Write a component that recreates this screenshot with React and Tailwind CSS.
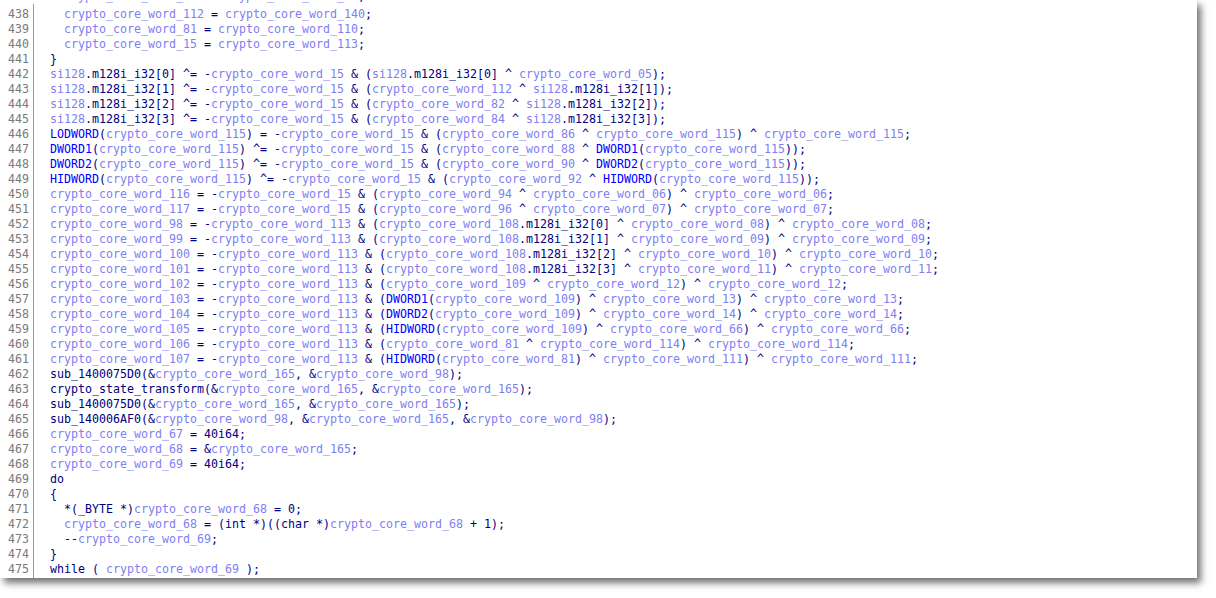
import React from 'react';

// Pseudocode lines, 437 is cut off by the top of the view (only its descenders show)
const FIRST_LINE = 438;
const CUT_LINE = '  crypto_core_word_140 = crypto_core_word_15;';
const LINES = [
  '  crypto_core_word_112 = crypto_core_word_140;',
  '  crypto_core_word_81 = crypto_core_word_110;',
  '  crypto_core_word_15 = crypto_core_word_113;',
  '}',
  'si128.m128i_i32[0] ^= -crypto_core_word_15 & (si128.m128i_i32[0] ^ crypto_core_word_05);',
  'si128.m128i_i32[1] ^= -crypto_core_word_15 & (crypto_core_word_112 ^ si128.m128i_i32[1]);',
  'si128.m128i_i32[2] ^= -crypto_core_word_15 & (crypto_core_word_82 ^ si128.m128i_i32[2]);',
  'si128.m128i_i32[3] ^= -crypto_core_word_15 & (crypto_core_word_84 ^ si128.m128i_i32[3]);',
  'LODWORD(crypto_core_word_115) = -crypto_core_word_15 & (crypto_core_word_86 ^ crypto_core_word_115) ^ crypto_core_word_115;',
  'DWORD1(crypto_core_word_115) ^= -crypto_core_word_15 & (crypto_core_word_88 ^ DWORD1(crypto_core_word_115));',
  'DWORD2(crypto_core_word_115) ^= -crypto_core_word_15 & (crypto_core_word_90 ^ DWORD2(crypto_core_word_115));',
  'HIDWORD(crypto_core_word_115) ^= -crypto_core_word_15 & (crypto_core_word_92 ^ HIDWORD(crypto_core_word_115));',
  'crypto_core_word_116 = -crypto_core_word_15 & (crypto_core_word_94 ^ crypto_core_word_06) ^ crypto_core_word_06;',
  'crypto_core_word_117 = -crypto_core_word_15 & (crypto_core_word_96 ^ crypto_core_word_07) ^ crypto_core_word_07;',
  'crypto_core_word_98 = -crypto_core_word_113 & (crypto_core_word_108.m128i_i32[0] ^ crypto_core_word_08) ^ crypto_core_word_08;',
  'crypto_core_word_99 = -crypto_core_word_113 & (crypto_core_word_108.m128i_i32[1] ^ crypto_core_word_09) ^ crypto_core_word_09;',
  'crypto_core_word_100 = -crypto_core_word_113 & (crypto_core_word_108.m128i_i32[2] ^ crypto_core_word_10) ^ crypto_core_word_10;',
  'crypto_core_word_101 = -crypto_core_word_113 & (crypto_core_word_108.m128i_i32[3] ^ crypto_core_word_11) ^ crypto_core_word_11;',
  'crypto_core_word_102 = -crypto_core_word_113 & (crypto_core_word_109 ^ crypto_core_word_12) ^ crypto_core_word_12;',
  'crypto_core_word_103 = -crypto_core_word_113 & (DWORD1(crypto_core_word_109) ^ crypto_core_word_13) ^ crypto_core_word_13;',
  'crypto_core_word_104 = -crypto_core_word_113 & (DWORD2(crypto_core_word_109) ^ crypto_core_word_14) ^ crypto_core_word_14;',
  'crypto_core_word_105 = -crypto_core_word_113 & (HIDWORD(crypto_core_word_109) ^ crypto_core_word_66) ^ crypto_core_word_66;',
  'crypto_core_word_106 = -crypto_core_word_113 & (crypto_core_word_81 ^ crypto_core_word_114) ^ crypto_core_word_114;',
  'crypto_core_word_107 = -crypto_core_word_113 & (HIDWORD(crypto_core_word_81) ^ crypto_core_word_111) ^ crypto_core_word_111;',
  'sub_1400075D0(&crypto_core_word_165, &crypto_core_word_98);',
  'crypto_state_transform(&crypto_core_word_165, &crypto_core_word_165);',
  'sub_1400075D0(&crypto_core_word_165, &crypto_core_word_165);',
  'sub_140006AF0(&crypto_core_word_98, &crypto_core_word_165, &crypto_core_word_98);',
  'crypto_core_word_67 = 40i64;',
  'crypto_core_word_68 = &crypto_core_word_165;',
  'crypto_core_word_69 = 40i64;',
  'do',
  '{',
  '  *(_BYTE *)crypto_core_word_68 = 0;',
  '  crypto_core_word_68 = (int *)((char *)crypto_core_word_68 + 1);',
  '  --crypto_core_word_69;',
  '}',
  'while ( crypto_core_word_69 );',
];

// Token classes: locals are lavender, dword macros bright blue, the rest navy
const TOKEN_RE = /(crypto_core_word_\d+|si128(?!\w)|LODWORD|HIDWORD|DWORD1|DWORD2)/g;

const tokenClass = (tok) => {
  if (/^(LODWORD|HIDWORD|DWORD1|DWORD2)$/.test(tok)) return 'text-[#0000ff]';
  if (/^(crypto_core_word_\d+|si128)$/.test(tok)) return 'text-[#8080f2]';
  return 'text-[#000080]';
};

const CodeLine = ({ text }) => {
  const parts = text.split(TOKEN_RE).filter((p) => p !== '');
  return (
    <div className="h-[15px] whitespace-pre">
      {parts.map((p, i) => (
        <span key={i} className={tokenClass(p)}>
          {p}
        </span>
      ))}
    </div>
  );
};

export default function App() {
  return (
    <div className="w-[1216px] h-[598px] bg-white overflow-hidden">
      <div className="w-[1197px] h-[578px] bg-white shadow-[4px_5px_7px_rgba(0,0,0,0.55)] overflow-hidden flex font-['DejaVu_Sans_Mono','Liberation_Mono',monospace] text-[11.63px] leading-[15px]">
        {/* line number gutter */}
        <div className="w-[34px] h-[574px] mt-[4px] border-r border-[#6ea3d8] pr-[4px] text-right text-[#7a7a7a]">
          <div className="mt-[3px]">
            {LINES.map((_, i) => (
              <div key={i} className="h-[15px]">
                {FIRST_LINE + i}
              </div>
            ))}
          </div>
        </div>

        {/* code */}
        <div className="flex-1 pl-[16px]">
          {/* bottom sliver of the line scrolled above the view */}
          <div className="h-[4px] overflow-hidden flex flex-col justify-end">
            <div className="shrink-0">
              <CodeLine text={CUT_LINE} />
            </div>
          </div>
          <div className="mt-[3px]">
            {LINES.map((line, i) => (
              <CodeLine key={i} text={line} />
            ))}
          </div>
        </div>
      </div>
    </div>
  );
}
